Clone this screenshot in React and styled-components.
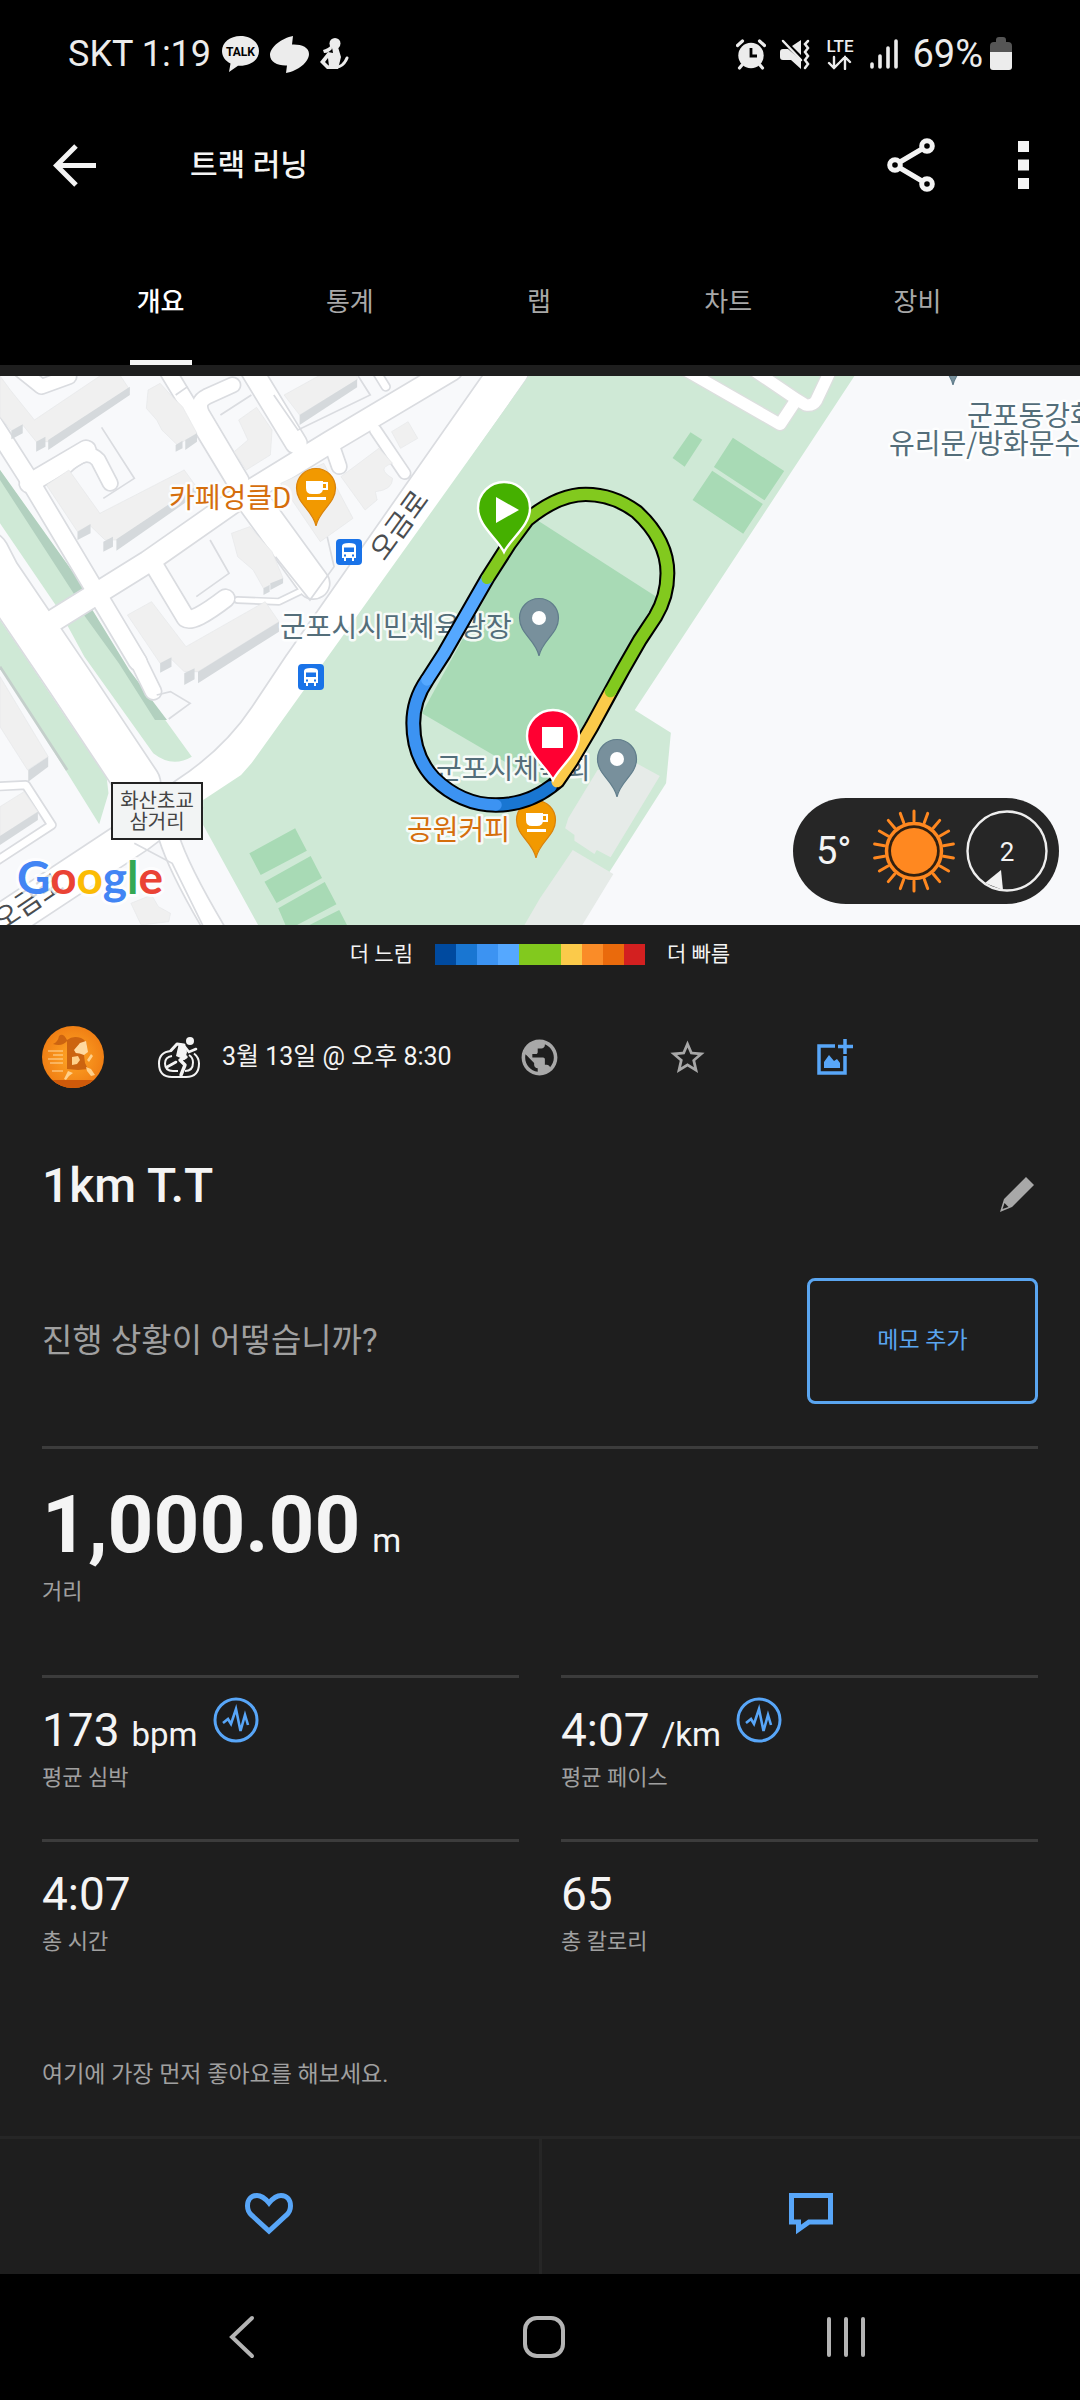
import React, { useState } from "react";
import styled, { createGlobalStyle } from "styled-components";
import { MdPublic, MdStarBorder } from "react-icons/md";

const GlobalStyle = createGlobalStyle`
  * { box-sizing: border-box; }
  body {
    margin: 0;
    background: #1e1e1e;
    color: #f4f4f4;
    font-family: Roboto, "Noto Sans CJK KR", sans-serif;
  }
  button { font: inherit; color: inherit; background: none; border: 0; padding: 0; cursor: pointer; }
  h1, h2, p, dl, dd, dt { margin: 0; font-weight: 400; }
  svg { display: block; }
`;

const Header = styled.header`
  background: #000;
`;

const StatusBar = styled.div`
  height: 108px;
  padding: 0 68px;
  display: flex;
  align-items: center;
  justify-content: space-between;
  color: #ececec;
`;

const StatusGroup = styled.div`
  display: flex;
  align-items: center;
  gap: ${(p) => p.$gap}px;
  font-size: ${(p) => p.$size}px;
  line-height: 48px;
`;

const AppBar = styled.div`
  height: 114px;
  padding: 0 33px 0 50px;
  display: flex;
  align-items: center;
`;

const Title = styled.h1`
  flex: 1;
  padding-left: 92px;
  font-size: 30px;
  line-height: 40px;
  font-weight: 500;
`;

const IconButton = styled.button`
  width: ${(p) => p.$width || 48}px;
  height: ${(p) => p.$height || 56}px;
  display: flex;
  align-items: center;
  justify-content: center;
  color: ${(p) => p.$color || "#f4f4f4"};
`;

const MenuSlot = styled.div`
  margin-left: 64px;
`;

const Tabs = styled.nav`
  display: flex;
  padding: 0 68px 0 66px;
`;

const Tab = styled.button`
  flex: 1;
  height: 143px;
  padding-top: 60px;
  display: flex;
  flex-direction: column;
  align-items: center;
  justify-content: space-between;
  font-size: 26px;
  line-height: 40px;
  font-weight: ${(p) => (p.$active ? 500 : 400)};
  color: ${(p) => (p.$active ? "#ffffff" : "#a8a8a8")};

  &::after {
    content: "";
    width: 62px;
    height: 5px;
    background: ${(p) => (p.$active ? "#f6f6f6" : "transparent")};
  }
`;

const MapArea = styled.section`
  position: relative;
  margin-top: 11px;
  overflow: hidden;
  svg.map { width: 100%; height: auto; }
`;

const WeatherPill = styled.div`
  position: absolute;
  right: 21px;
  bottom: 21px;
  height: 106px;
  padding: 0 10px 0 23px;
  display: flex;
  align-items: center;
  border-radius: 53px;
  background: #262626;
`;

const Temperature = styled.span`
  width: 56px;
  font-size: 38px;
  line-height: 48px;
`;

const Gauges = styled.div`
  display: flex;
  gap: 9px;
`;

const Legend = styled.div`
  height: 58px;
  display: flex;
  align-items: center;
  justify-content: center;
  gap: 22px;
  font-size: 21px;
  line-height: 32px;
`;

const Scale = styled.div`
  display: flex;
`;

const Swatch = styled.span`
  width: 21px;
  height: 21px;
  background: ${(p) => p.$color};
`;

const Main = styled.main`
  padding: 43px 42px 0;
`;

const InfoRow = styled.div`
  display: grid;
  grid-template-columns: 62px minmax(0, 361px) repeat(3, minmax(0, 148px));
  align-items: center;
  justify-items: center;
`;

const When = styled.div`
  width: 100%;
  padding-left: 54px;
  display: flex;
  align-items: center;
  gap: 22px;
  font-size: 25px;
  line-height: 40px;
  white-space: nowrap;
`;

const NameRow = styled.div`
  margin-top: 70px;
  display: flex;
  justify-content: space-between;
  align-items: flex-end;
`;

const ActivityName = styled.h2`
  font-size: 48px;
  line-height: 56px;
  font-weight: 500;
`;

const MemoRow = styled.div`
  margin-top: 64px;
  padding-bottom: 42px;
  border-bottom: 3px solid #3c3c3c;
  display: flex;
  align-items: center;
  justify-content: space-between;
`;

const MemoPrompt = styled.p`
  font-size: 33px;
  line-height: 48px;
  color: #a0a0a0;
`;

const MemoButton = styled.button`
  width: 231px;
  height: 126px;
  border: 3px solid #5aa5f0;
  border-radius: 8px;
  color: #5aa5f0;
  font-size: 23px;
  line-height: 32px;
`;

const Hero = styled.dl`
  display: flex;
  flex-direction: column-reverse;
  gap: 3px;
  padding: 28px 0 67px;
`;

const HeroValue = styled.dd`
  font-size: 80px;
  line-height: 96px;
  font-weight: 700;
`;

const Unit = styled.span`
  margin-left: 12px;
  font-size: 33px;
  line-height: 32px;
  font-weight: 400;
`;

const Label = styled.dt`
  font-size: 22px;
  line-height: 32px;
  color: #a0a0a0;
`;

const StatGrid = styled.dl`
  display: grid;
  grid-template-columns: 1fr 1fr;
  column-gap: 42px;
`;

const StatCell = styled.div`
  display: flex;
  flex-direction: column-reverse;
  gap: 4px;
  padding: 19px 0 45px;
  border-top: 3px solid #3c3c3c;
`;

const StatValue = styled.dd`
  height: 61px;
  display: flex;
  align-items: flex-end;
  gap: 15px;
  font-size: 46px;
  line-height: 56px;
`;

const ChartButton = styled.button`
  align-self: flex-start;
`;

const LikeHint = styled.p`
  padding: 56px 0 45px;
  font-size: 23px;
  line-height: 32px;
  color: #a0a0a0;
`;

const Social = styled.div`
  display: flex;
  border-top: 3px solid #262626;
`;

const SocialButton = styled.button`
  flex: 1;
  height: 135px;
  padding-top: 15px;
  display: flex;
  align-items: center;
  justify-content: center;
  color: #58a6f8;

  & + & { border-left: 3px solid #262626; }
`;

const SystemNav = styled.nav`
  height: 126px;
  padding: 0 83px 0 91px;
  background: #000;
  display: flex;
`;

const SystemButton = styled.button`
  flex: 1;
  display: flex;
  align-items: center;
  justify-content: center;
  color: #b4b4b4;
`;

/* ---------- status icons ---------- */

const TalkIcon = () => (
  <svg width="37" height="36" viewBox="0 0 37 36">
    <path d="M18.500 0C8 0 0 6.500 0 15c0 5.500 3.500 10 8.500 12.500L7 36l9-6.200c12 .8 21-5.800 21-14.800C37 6.500 29 0 18.500 0z" fill="#ececec" />
    <text x="18.500" y="20" fontSize="12" fontWeight="700" fontFamily="Roboto, sans-serif" textAnchor="middle" fill="#000">TALK</text>
  </svg>
);

const SwirlIcon = () => (
  <svg width="39" height="37" viewBox="0 0 39 37">
    <path d="M23 0C12 2 0 11 0 19c0 7 8 11 17 10.500L16 37c12-2 23-11 23-19 0-7-8-10-17-9.500z" fill="#ececec" />
  </svg>
);

const PersonIcon = () => (
  <svg width="29" height="32" viewBox="0 0 29 32" fill="#ececec">
    <circle cx="15" cy="5.500" r="5.500" />
    <path d="M11 7c-2 3-5 4-8 5l1 3c4 0 6-2 8-4z" />
    <path d="M12 9h6l3 10-3 12H7L0 24l8-10 5 1zM8 20l-3 4 4 4z" fillRule="evenodd" />
    <path d="M9 29c8 2 15-1 18-9" fill="none" stroke="#ececec" strokeWidth="3" strokeLinecap="round" />
  </svg>
);

const AlarmIcon = () => (
  <svg width="30" height="31" viewBox="0 0 30 31">
    <circle cx="15" cy="16.500" r="12.700" fill="#ececec" />
    <path d="M1.500 6.500l5-4.500M28.500 6.500l-5-4.500M6 26l-2.500 3M24 26l2.500 3" stroke="#ececec" strokeWidth="3.200" strokeLinecap="round" />
    <path d="M15 9v8h6" fill="none" stroke="#000" strokeWidth="2.800" />
  </svg>
);

const MuteIcon = () => (
  <svg width="30" height="31" viewBox="0 0 30 31">
    <path d="M3 10h5L21 21v9l-10-9H3q-3 0-3-3v-5q0-3 3-3zM12 7l9-6v15z" fill="#ececec" />
    <path d="M3 2l18 19" stroke="#ececec" strokeWidth="2.500" strokeLinecap="round" />
    <path d="M28 2l-3 3 3 4-3 4 3 4-3 4 3 4-3 4" fill="none" stroke="#ececec" strokeWidth="2.500" strokeLinecap="round" />
  </svg>
);

const LteIcon = () => (
  <svg width="32" height="32" viewBox="0 0 32 32">
    <text x="16" y="14" fontSize="17" fontWeight="500" fontFamily="Roboto, sans-serif" textAnchor="middle" fill="#ececec">LTE</text>
    <path d="M10 19v11M5 25l5 5 5-5M21 31V19M16 24l5-5 5 5" fill="none" stroke="#ececec" strokeWidth="2.400" strokeLinecap="round" />
  </svg>
);

const SignalIcon = () => (
  <svg width="28" height="31" viewBox="0 0 28 31">
    <path d="M2 25v3M10 17v11M18 9v19M26 2v26" stroke="#ececec" strokeWidth="3.600" strokeLinecap="round" />
  </svg>
);

const BatteryIcon = () => (
  <svg width="22" height="34" viewBox="0 0 22 34">
    <path d="M6 3q0-3 3-3h4q3 0 3 3v2h2q4 0 4 4v7H0V9q0-4 4-4h2z" fill="#555" />
    <path d="M0 15h22v15q0 3-3 3H3q-3 0-3-3z" fill="#ececec" />
  </svg>
);

/* ---------- app icons ---------- */

const BackArrow = () => (
  <svg width="43" height="43" viewBox="0 0 43 43" fill="none" stroke="currentColor" strokeWidth="5">
    <path d="M23 2L3.500 21.500 23 41M4 21.500h39" />
  </svg>
);

const ShareIcon = () => (
  <svg width="48" height="54" viewBox="0 0 48 54" fill="none" stroke="currentColor" strokeWidth="5">
    <circle cx="8" cy="27" r="5.300" />
    <circle cx="40" cy="8" r="5.300" />
    <circle cx="40" cy="46" r="5.300" />
    <path d="M13 24l22-13M13 30l22 13" />
  </svg>
);

const KebabIcon = () => (
  <svg width="11" height="48" viewBox="0 0 11 48" fill="currentColor">
    <path d="M0 0h11v11H0zM0 18.500h11v11H0zM0 37h11v11H0z" />
  </svg>
);

const SunIcon = () => (
  <svg width="84" height="84" viewBox="-42 -42 84 84">
    {Array.from({ length: 18 }, (_, i) => (
      <path key={i} d="M0-30V-40" transform={`rotate(${i * 20})`} stroke="#ff8820" strokeWidth="3" strokeLinecap="round" />
    ))}
    <circle r="27.500" fill="#33200f" stroke="#ff8820" strokeWidth="3.500" />
    <circle r="23" fill="#ff8820" />
  </svg>
);

const WindIcon = () => (
  <svg width="84" height="84" viewBox="-42 -42 84 84">
    <circle r="39.500" fill="none" stroke="#eee" strokeWidth="2.400" />
    <path d="M-6 19L-22 32-4 39z" fill="#f2f2f2" />
    <text y="10" fontSize="26" fontFamily="Roboto, sans-serif" textAnchor="middle" fill="#f4f4f4">2</text>
  </svg>
);

const Avatar = () => (
  <svg width="62" height="62" viewBox="0 0 62 62" role="img" aria-label="프로필">
    <defs>
      <clipPath id="avatarClip"><circle cx="31" cy="31" r="31" /></clipPath>
      <radialGradient id="avatarFill"><stop offset="0" stopColor="#ffa726" /><stop offset="1" stopColor="#f07f14" /></radialGradient>
    </defs>
    <g clipPath="url(#avatarClip)">
      <rect width="62" height="62" fill="url(#avatarFill)" />
      <rect y="54" width="62" height="8" fill="#cf5a0a" />
      <path d="M25 14q-4-8-8-4-1 6-6 8 9 3 14-3zM25 14q6-5 14-2 5 2 6 8l-7-3-3 6-2 8h-8z" fill="#cc6410" />
      <path d="M38 17l6-2 2 11-4 3h-7l-3-5z" fill="#ffd9a0" />
      <path d="M25 29q8-4 17 0l1 8 3 6-10 1-11-1z" fill="#cc6410" />
      <path d="M30 31l6-1 2 4-3 4-5 1zM45 34l4-6 2 2-4 6zM26 45l5 2-4 3-3 4-2-1zM44 41l5 2 4 6-4 1-4-5z" fill="#ffd08a" />
      <path d="M6 25h15M11 29h10M6 33h15M8 37h13M10 45h11" stroke="#ffd9a0" strokeWidth="1.200" />
    </g>
  </svg>
);

const TrackRunIcon = () => (
  <svg width="42" height="41" viewBox="0 0 42 41" fill="none" stroke="#f4f4f4">
    <circle cx="32" cy="4" r="4" fill="#f4f4f4" stroke="none" />
    <path d="M13 14Q1 15 1 26.500 1 40 14 40h14q13 0 13-13.500 0-6-5-10" strokeWidth="2" />
    <path d="M14 19q-7 1-7 7.500Q7 34 15 34h5M27 34q8 0 8-8.500 0-5-4-7.500" strokeWidth="2" />
    <path d="M13 13.500l6-6.500 7 1" strokeWidth="3" strokeLinejoin="round" strokeLinecap="round" />
    <path d="M28 20l-6 3 5 5-4 10" strokeWidth="3.400" strokeLinejoin="round" strokeLinecap="round" />
    <path d="M27 10l4 5 7-3M18 25l-9 5" strokeWidth="2.600" strokeLinecap="round" />
    <path d="M21 6l6 2 2 7-2 8-9-4z" fill="#f4f4f4" stroke="none" />
  </svg>
);

const AddImageIcon = () => (
  <svg width="36" height="36" viewBox="0 0 36 36" fill="none" stroke="#58a6f8" strokeWidth="3.500">
    <path d="M18 7H2v27h26V17M28 0v15M21 7.500h15" />
    <path d="M7 29v-6l5-7 5 6 3-2 3 4v5z" fill="#58a6f8" stroke="none" />
  </svg>
);

const PencilIcon = () => (
  <svg width="35" height="35" viewBox="0 0 35 35" fill="#a8a8a8">
    <path d="M26 0l8 8-22 22-8-8zM4 22l8 8-12 5zM4.500 26l-2 6 6-2z" fillRule="evenodd" />
  </svg>
);

const PulseIcon = () => (
  <svg width="46" height="46" viewBox="0 0 46 46" fill="none" stroke="#58a6f8">
    <circle cx="23" cy="23" r="21" strokeWidth="3" />
    <path d="M10 26l5-4 3 5 5-15 4.500 22L32 18l3 10" strokeWidth="2.600" />
  </svg>
);

const HeartIcon = () => (
  <svg width="50" height="44" viewBox="0 0 50 44" fill="none" stroke="currentColor" strokeWidth="5">
    <path d="M25 11C20 5 17 3.500 13 3.500 7 3.500 3.500 8 3.500 14c0 4 1.500 7 4.500 9.500L25 39l17-15.500c3-2.500 4.500-5.500 4.500-9.500 0-6-3.500-10.500-9.500-10.500-4 0-7 1.500-12 7.500z" />
  </svg>
);

const CommentIcon = () => (
  <svg width="44" height="42" viewBox="0 0 44 42" fill="none" stroke="currentColor" strokeWidth="5">
    <path d="M2.500 2.500h39v26.500H20L9.500 36.500V29h-7z" />
  </svg>
);

/* ---------- map ---------- */

const halo = { paintOrder: "stroke", stroke: "#ffffff", strokeOpacity: 0.85, strokeWidth: 5, strokeLinejoin: "round" };

const MapText = ({ children, size = 28, fill = "#546e7a", ...rest }) => (
  <text fontFamily='"Noto Sans CJK KR", sans-serif' fontSize={size} fill={fill} {...halo} {...rest}>
    {children}
  </text>
);

const PoiPin = ({ x, y, color, edge, children }) => (
  <g transform={`translate(${x} ${y})`}>
    <path d="M0 0C-3-16-19.500-22-19.500-38a19.500 19.500 0 0 1 39 0C19.500-22 3-16 0 0z" fill={color} stroke={edge} strokeWidth="1.200" />
    {children}
  </g>
);

const Cup = () => (
  <g fill="#fff">
    <path d="M-10-45H7v7q0 6-6 6h-5q-6 0-6-6zM-9-29H10v3H-9z" />
    <path d="M7-43h4v6H6" fill="none" stroke="#fff" strokeWidth="2" />
  </g>
);

const RoutePin = ({ x, y, color, children }) => (
  <g transform={`translate(${x} ${y})`}>
    <path d="M0 0C-7-14-26-26-26-44a26 26 0 0 1 52 0C26-26 7-14 0 0z" fill={color} stroke="#fff" strokeWidth="2.400" />
    {children}
  </g>
);

const BusStop = ({ x, y }) => (
  <g transform={`translate(${x} ${y})`}>
    <rect width="26" height="26" rx="4" fill="#1a73e8" />
    <path d="M6 7q0-3 7-3t7 3v12h-2v3h-2v-3h-6v3H8v-3H6z" fill="#fff" />
    <path d="M8 8.500h10v4.500H8zM8 15.500h2v2H8zM16 15.500h2v2h-2z" fill="#1a73e8" />
  </g>
);

const roads = [
  ["M-40 550L-10 610 200 930 400 1240", 128],
  ["M490 1400Q520 1500 630 1690", 54],
  ["M1480 0L880 885 780 1040Q690 1180 540 1280L400 1390-40 1690", 108],
  ["M-20 160L85 330 270 650 400 875", 50],
  ["M150 755L290 665 430 575 700 380 960 215 1310 0", 62],
  ["M85 340L250 240", 54],
  ["M485 0L690 350", 44],
  ["M730 0L860 220", 60],
  ["M730 385L910 640", 90],
  ["M1090 180L1175 310", 30],
  ["M960 215L985 290", 40],
  ["M450 590L540 745Q560 760 655 685", 50],
  ["M700 330L585 130Q570 95 600 80L675 45", 42],
  ["M190 290Q250 230 285 270L320 340", 40],
  ["M690 690L810 695 870 665", 14],
  ["M400 870L445 965", 44],
  ["M-20 1250L75 1245 150 1365-20 1480", 20],
  ["M60 0L120 50 200 20", 40],
  ["M1090 0L1120 50", 20],
];

const buildings = [
  "M0 18L30 60 100 150 290 18H350L377 60 140 215H105L66 165 33 182 0 140z",
  "M430 60L465 40 500 80 530 110 572 190 515 225 470 180 455 150 425 115z",
  "M825 75L925 18H1037V30L870 135z",
  "M693 150L745 112 790 180 785 255 715 300 680 245 720 210z",
  "M135 345L200 300 290 430 535 300 570 350 340 510H305L260 465 225 485z",
  "M672 490L725 470 790 545 822 625 765 655 735 600 690 560z",
  "M370 735L440 695 540 830 770 695 810 755 575 905H535L495 865 465 880z",
  "M815 340L940 280 1025 445 930 515z",
  "M990 320L1100 235 1140 280Q1090 295 1140 325 1140 360 1090 365L1095 390 1060 420z",
  "M1137 185L1185 155 1213 205 1163 235z",
  "M0 920L140 1160 80 1200 0 1070z",
  "M0 1310L70 1265 110 1325 0 1400z",
  "M380 1600L440 1575 460 1610 495 1630 490 1655 410 1665z",
];

const shades = [
  "M377 50V75L140 240V210zM105 215L132 200V230L105 245zM33 182L66 163V190L33 208z",
  "M572 190V215L538 240V210zM510 225L530 212V235L510 245z",
  "M1037 28V52L870 165V135z",
  "M570 348V375L338 542V508zM300 515L328 500V530L300 545zM225 485L263 462V490L225 510z",
  "M822 625V640L785 660V640zM765 655L783 645V665L765 675z",
  "M810 755V785L575 940V905zM535 910L565 895V928L535 945zM465 880L498 862V890L465 908z",
  "M140 1160V1190L82 1235V1200z",
  "M110 1325V1350L0 1425V1398z",
];

const segments = [
  { color: "#82c91e", d: "M1415 625L1480 520 1530 450Q1620 373 1701 373 1780 373 1848 425 1938 510 1938 610 1938 680 1903 740L1858 810 1808 900 1773 965" },
  { color: "#fbca4a", d: "M1773 965L1718 1070 1658 1175 1618 1235" },
  { color: "#55a8ff", d: "M1415 625L1290 850 1240 930" },
  { color: "#3c93f2", d: "M1240 930Q1200 990 1200 1060 1200 1160 1260 1225 1340 1305 1440 1305" },
  { color: "#1976d2", d: "M1440 1305Q1530 1305 1600 1250" },
];

const trackPath = "M1415 625L1480 520 1530 450Q1620 373 1701 373 1780 373 1848 425 1938 510 1938 610 1938 680 1903 740L1858 810 1808 900 1718 1070 1658 1175 1618 1235Q1540 1305 1440 1305 1340 1305 1260 1225 1200 1160 1200 1060 1200 990 1240 930L1290 850z";

const RouteMap = () => (
  <svg className="map" viewBox="0 0 1080 549" role="img" aria-label="활동 경로 지도">
    <rect width="1080" height="549" fill="#f8f9fb" />
    <g transform="translate(0 -6) scale(.34439 .33333)">
      <path d="M0 300L245 655 165 710 0 460zM0 750L60 840 310 1225 315 1270 288 1363 190 1200 0 890zM195 765L265 715 375 900 557 1160Q500 1195 445 1150L245 860z" fill="#cfe9d6" />
      <path d="M0 300L245 655 215 672 0 330zM240 730L265 715 375 900 485 1050H450L345 880z" fill="#b2d0bf" />
      <path d="M0 890L195 1200" stroke="#c4cfcb" strokeWidth="8" />
      {roads.map(([d, w]) => (
        <path key={d} d={d} fill="none" stroke="#dadce0" strokeWidth={w + 10} strokeLinejoin="round" strokeLinecap="round" />
      ))}
      {roads.map(([d, w]) => (
        <path key={d} d={d} fill="none" stroke="#fff" strokeWidth={w} strokeLinejoin="round" strokeLinecap="round" />
      ))}
      <path d="M390 1420L500 1480 600 1690M610 510L665 610 570 680M950 500L970 590 900 690 800 560M295 172L390 325 300 385M795 75L865 180 1075 75 1040 18M640 135L730 75M510 75L545 50M455 975L495 965 552 1000 490 1047" fill="none" stroke="#dadce0" strokeWidth="5" />
      {buildings.map((d) => <path key={d} d={d} fill="#f0f0f0" stroke="#e6e8e9" strokeWidth="2" />)}
      {shades.map((d) => <path key={d} d={d} fill="#d5d9dc" />)}
      <path d="M1535 18H2481L1843 1020 1948 1088 1934 1240 1770 1505 1670 1670H752L590 1365V1290L700 1215 730 1180 945 870z" fill="#cfe9d6" />
      <path d="M1540 437L1908 682 1820 840 1590 1250 1225 1030z" fill="#a8dab5" />
      <path d="M2005 187L2039 209 1988 290 1953 264zM2128 203L2277 303 2220 391 2073 291zM2068 302L2215 402 2158 491 2011 390z" fill="#a8dab5" />
      <path d="M857 1375L891 1442 757 1515 724 1450zM902 1458L935 1524 803 1599 768 1535zM943 1536L977 1603 835 1680 808 1615zM985 1620L1015 1680H870z" fill="#a8dab5" />
      <g fill="none" strokeLinejoin="round">
        <path d="M1990 0L2265 163 2313 88 2180 -5M2313 88L2340 105Q2360 108 2370 92L2412 0" stroke="#dcdfde" strokeWidth="42" />
        <path d="M1990 0L2265 163 2313 88 2180 -5M2313 88L2340 105Q2360 108 2370 92L2412 0" stroke="#fff" strokeWidth="34" />
      </g>
      <path d="M1848 1180L1916 1218 1773 1462 1733 1440 1726 1452 1668 1412V1395L1641 1375 1650 1345 1735 1200zM1663 1440L1781 1512 1688 1670H1520L1568 1585z" fill="#e6ebe8" />
    </g>

    <MapText x="169" y="132" fill="#d56e0c">카페엉클D</MapText>
    <MapText x="407" y="464" fill="#d56e0c">공원커피</MapText>
    <MapText x="280" y="261">군포시시민체육광장</MapText>
    <MapText x="436" y="403">군포시체육회</MapText>
    <MapText x="967" y="50">군포동강화</MapText>
    <MapText x="889" y="78">유리문/방화문수</MapText>
    <MapText transform="translate(399 149) rotate(-54)" y="10" fill="#4a4d50" textAnchor="middle">오금로</MapText>
    <MapText transform="translate(28 526) rotate(-34)" y="10" fill="#4a4d50" textAnchor="middle">오금로</MapText>

    <rect x="112" y="407" width="90" height="56" fill="#f2f4f4" stroke="#222" strokeWidth="2" />
    <g fontFamily='"Noto Sans CJK KR", sans-serif' fontSize="20" fill="#444" textAnchor="middle">
      <text x="157" y="432">화산초교</text>
      <text x="157" y="453">삼거리</text>
    </g>

    <BusStop x={336} y={163} />
    <BusStop x={298} y={288} />
    <PoiPin x={316} y={150} color="#f29900" edge="#d9820a"><Cup /></PoiPin>
    <PoiPin x={536} y={482} color="#f29900" edge="#d9820a"><Cup /></PoiPin>
    <PoiPin x={539} y={280} color="#78909c" edge="#607d8b"><circle cy="-38" r="7" fill="#fff" /></PoiPin>
    <PoiPin x={617} y={421} color="#78909c" edge="#607d8b"><circle cy="-38" r="7" fill="#fff" /></PoiPin>
    <PoiPin x={953} y={9} color="#78909c" edge="#607d8b" />

    <g transform="translate(0 -6) scale(.34439 .33333)" fill="none" strokeLinejoin="round">
      <path d={trackPath} stroke="#000" strokeWidth="46" />
      {[...segments].reverse().map((s) => (
        <path key={s.color} d={s.d} stroke={s.color} strokeWidth="34" strokeLinecap="round" />
      ))}
    </g>

    <RoutePin x={504} y={176} color="#45b000">
      <path d="M-8-55v26l23-13z" fill="#fff" />
    </RoutePin>
    <RoutePin x={553} y={404} color="#ff0032">
      <rect x="-11" y="-53" width="21" height="21" fill="#fff" />
    </RoutePin>

    <text x="17" y="518" fontFamily="Lato, sans-serif" fontSize="46" fontWeight="700" paintOrder="stroke" stroke="#fff" strokeOpacity="0.8" strokeWidth="6" strokeLinejoin="round">
      <tspan fill="#4285f4">G</tspan><tspan fill="#ea4335">o</tspan><tspan fill="#fbbc05">o</tspan><tspan fill="#4285f4">g</tspan><tspan fill="#34a853">l</tspan><tspan fill="#ea4335">e</tspan>
    </text>
  </svg>
);

const tabs = ["개요", "통계", "랩", "차트", "장비"];
const paceColors = ["#004a9f", "#1976d2", "#3c93f2", "#55a8ff", "#82c91e", "#82c91e", "#fbca4a", "#fa8c28", "#ea6a0c", "#d32020"];
const stats = [
  { value: "173", unit: "bpm", label: "평균 심박", chart: true },
  { value: "4:07", unit: "/km", label: "평균 페이스", chart: true },
  { value: "4:07", label: "총 시간" },
  { value: "65", label: "총 칼로리" },
];

export default function App() {
  const [active, setActive] = useState(0);
  return (
    <>
      <GlobalStyle />
      <Header>
        <StatusBar>
          <StatusGroup $gap={11} $size={36}>
            <span>SKT 1:19</span>
            <TalkIcon />
            <SwirlIcon />
            <PersonIcon />
          </StatusGroup>
          <StatusGroup $gap={14} $size={38}>
            <AlarmIcon />
            <MuteIcon />
            <LteIcon />
            <SignalIcon />
            <StatusGroup $gap={7} $size={38}>
              <span>69%</span>
              <BatteryIcon />
            </StatusGroup>
          </StatusGroup>
        </StatusBar>
        <AppBar>
          <IconButton aria-label="뒤로"><BackArrow /></IconButton>
          <Title>트랙 러닝</Title>
          <IconButton aria-label="공유"><ShareIcon /></IconButton>
          <MenuSlot>
            <IconButton aria-label="메뉴"><KebabIcon /></IconButton>
          </MenuSlot>
        </AppBar>
        <Tabs>
          {tabs.map((t, i) => (
            <Tab key={t} $active={i === active} onClick={() => setActive(i)}>{t}</Tab>
          ))}
        </Tabs>
      </Header>

      <MapArea>
        <RouteMap />
        <WeatherPill>
          <Temperature>5°</Temperature>
          <Gauges>
            <SunIcon />
            <WindIcon />
          </Gauges>
        </WeatherPill>
      </MapArea>
      <Legend>
        <span>더 느림</span>
        <Scale>
          {paceColors.map((c, i) => <Swatch key={i} $color={c} />)}
        </Scale>
        <span>더 빠름</span>
      </Legend>

      <Main>
        <InfoRow>
          <Avatar />
          <When>
            <TrackRunIcon />
            <span>3월 13일 @ 오후 8:30</span>
          </When>
          <IconButton aria-label="공개 범위" $color="#a8a8a8"><MdPublic size={43} /></IconButton>
          <IconButton aria-label="즐겨찾기" $color="#a8a8a8"><MdStarBorder size={41} /></IconButton>
          <IconButton aria-label="사진 추가"><AddImageIcon /></IconButton>
        </InfoRow>
        <NameRow>
          <ActivityName>1km T.T</ActivityName>
          <IconButton aria-label="이름 편집" $width={42} $height={40}><PencilIcon /></IconButton>
        </NameRow>
        <MemoRow>
          <MemoPrompt>진행 상황이 어떻습니까?</MemoPrompt>
          <MemoButton>메모 추가</MemoButton>
        </MemoRow>

        <Hero>
          <Label>거리</Label>
          <HeroValue>1,000.00<Unit>m</Unit></HeroValue>
        </Hero>
        <StatGrid>
          {stats.map((s) => (
            <StatCell key={s.label}>
              <Label>{s.label}</Label>
              <StatValue>
                <span>{s.value}{s.unit && <Unit>{s.unit}</Unit>}</span>
                {s.chart && <ChartButton aria-label={`${s.label} 차트`}><PulseIcon /></ChartButton>}
              </StatValue>
            </StatCell>
          ))}
        </StatGrid>
        <LikeHint>여기에 가장 먼저 좋아요를 해보세요.</LikeHint>
      </Main>

      <Social>
        <SocialButton aria-label="좋아요"><HeartIcon /></SocialButton>
        <SocialButton aria-label="댓글"><CommentIcon /></SocialButton>
      </Social>
      <SystemNav>
        <SystemButton aria-label="이전">
          <svg width="26" height="44" viewBox="0 0 26 44" fill="none" stroke="currentColor" strokeWidth="4" strokeLinecap="round">
            <path d="M23 3L3 22l20 19" />
          </svg>
        </SystemButton>
        <SystemButton aria-label="홈">
          <svg width="42" height="42" viewBox="0 0 42 42" fill="none" stroke="currentColor" strokeWidth="4">
            <rect x="2" y="2" width="38" height="38" rx="12" />
          </svg>
        </SystemButton>
        <SystemButton aria-label="최근 앱">
          <svg width="38" height="42" viewBox="0 0 38 42" stroke="currentColor" strokeWidth="4" strokeLinecap="round">
            <path d="M2 3v36M19 3v36M36 3v36" />
          </svg>
        </SystemButton>
      </SystemNav>
    </>
  );
}
